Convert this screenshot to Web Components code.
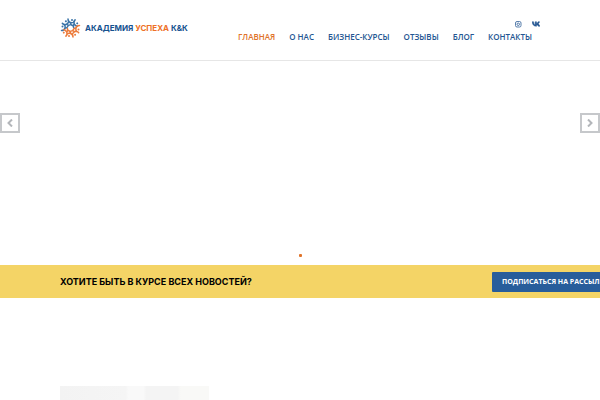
<!DOCTYPE html>
<html lang="ru">
<head>
<meta charset="utf-8">
<meta name="viewport" content="width=device-width, initial-scale=1">
<title>Академия Успеха К&amp;К</title>
<style>
  body {
    margin: 0;
    background: #fff;
    color: #000;
    font-family: "Open Sans", "Noto Sans", sans-serif;
    overflow-x: hidden;
    --blue: #245692;
    --orange: #e0732a;
    --yellow: #f4d466;
  }
</style>
</head>
<body>
<site-header>
  <brand-logo slot="logo"></brand-logo>
  <social-links slot="social"></social-links>
  <nav-link href="#main" active>ГЛАВНАЯ</nav-link>
  <nav-link href="#about">О НАС</nav-link>
  <nav-link href="#courses">БИЗНЕС-КУРСЫ</nav-link>
  <nav-link href="#reviews">ОТЗЫВЫ</nav-link>
  <nav-link href="#blog">БЛОГ</nav-link>
  <nav-link href="#contacts">КОНТАКТЫ</nav-link>
</site-header>
<main>
  <hero-slider></hero-slider>
  <subscribe-bar>
    <span>ХОТИТЕ БЫТЬ В КУРСЕ ВСЕХ НОВОСТЕЙ?</span>
    <span slot="action">ПОДПИСАТЬСЯ НА РАССЫЛКУ</span>
  </subscribe-bar>
  <preview-picture></preview-picture>
</main>

<script>
class BaseElement extends HTMLElement {
  constructor() {
    super();
    this.shadowDOM = this.attachShadow({ mode: "open" });
  }

  connectedCallback() {
    this.render();
  }
}

class SiteHeader extends BaseElement {
  render() {
    this.shadowDOM.innerHTML = `
    <style>
    :host {
      display: block;
      border-bottom: 1px solid #e6e6e6;
    }
    header {
      display: flex;
      justify-content: space-between;
      align-items: flex-start;
      padding: 18px 10% 17px;
    }
    .right {
      display: flex;
      flex-direction: column;
      align-items: flex-end;
      gap: 3px;
      padding-top: 2px;
    }
    nav {
      display: flex;
      gap: 14px;
      padding-right: 8px;
    }
    </style>

    <header>
      <slot name="logo"></slot>
      <div class="right">
        <slot name="social"></slot>
        <nav><slot></slot></nav>
      </div>
    </header>
    `;
  }
}

class BrandLogo extends BaseElement {
  render() {
    this.shadowDOM.innerHTML = `
    <style>
    :host {
      display: block;
    }
    a {
      display: flex;
      align-items: center;
      gap: 4px;
      color: #16528f;
      font: bold 8px/20px Inter, Arial, sans-serif;
      text-decoration: none;
      white-space: nowrap;
    }
    svg {
      display: block;
    }
    .accent {
      color: #ee7128;
    }
    </style>

    <a href="#main">
      <svg width="21" height="20" viewBox="-21 -20 42 40" aria-hidden="true">
        <defs>
          <g id="man">
            <circle cx="3" cy="-16" r="2" fill="currentColor"/>
            <path d="M-5-18q0 6 5 7q4 1 7-1M0-11q-1 4 4 6" fill="none" stroke="currentColor" stroke-width="3" stroke-linecap="round"/>
          </g>
        </defs>
        <g color="#3a74a8">
          <use href="#man" transform="rotate(-90)"/>
          <use href="#man" transform="rotate(-45)"/>
          <use href="#man"/>
          <use href="#man" transform="rotate(45)"/>
        </g>
        <g color="#ec7c3c">
          <use href="#man" transform="rotate(90)"/>
          <use href="#man" transform="rotate(135)"/>
          <use href="#man" transform="rotate(180)"/>
          <use href="#man" transform="rotate(225)"/>
        </g>
      </svg>
      <span>АКАДЕМИЯ <span class="accent">УСПЕХА</span> К&amp;К</span>
    </a>
    `;
  }
}

class SocialLinks extends BaseElement {
  render() {
    this.shadowDOM.innerHTML = `
    <style>
    :host {
      display: flex;
      gap: 10px;
    }
    a {
      display: block;
      color: var(--blue);
    }
    svg {
      display: block;
    }
    </style>

    <a href="#instagram" aria-label="Instagram">
      <svg width="8" height="8" viewBox="0 0 16 16" fill="none" stroke="currentColor" stroke-width="1.5">
        <rect x="3" y="3" width="11" height="11" rx="3"/>
        <circle cx="8.5" cy="8.5" r="2.5"/>
      </svg>
    </a>
    <a href="#vk" aria-label="VK">
      <svg width="8" height="8" viewBox="0 0 16 16" fill="currentColor" stroke="currentColor">
        <path d="M8.8 12.5C3.5 12.5.4 9 .2 3.5h2.9c.1 4 1.9 5.6 3.2 6V3.5h2.7v3.4C10.4 6.700 11.700 5.200 12.200 3.500h2.900c-.4 2-1.900 3.500-3 4.200 1.100.5 2.900 1.800 3.700 4.800h-3C12.200 10.800 10.900 9.500 9 9.300v3.200z"/>
      </svg>
    </a>
    `;
  }
}

class NavLink extends BaseElement {
  render() {
    this.shadowDOM.innerHTML = `
    <style>
    :host {
      display: block;
    }
    a {
      display: block;
      color: var(--blue);
      font: 600 8px/12px "Open Sans", "Noto Sans", sans-serif;
      text-decoration: none;
      white-space: nowrap;
    }
    :host([active]) a {
      color: var(--orange);
    }
    </style>

    <a href="${this.getAttribute("href")}"><slot></slot></a>
    `;
  }
}

class HeroSlider extends BaseElement {
  render() {
    this.shadowDOM.innerHTML = `
    <style>
    :host {
      display: block;
    }
    section {
      display: flex;
      flex-direction: column;
      padding: 52px 0 8px;
      gap: 121px;
    }
    .arrows {
      display: flex;
      justify-content: space-between;
    }
    button {
      display: grid;
      place-items: center;
      box-sizing: border-box;
      width: 20px;
      height: 20px;
      padding: 0;
      border: 2px solid #c6c8cb;
      background: #fff;
      color: #b3b6ba;
    }
    .dot {
      align-self: center;
      width: 3px;
      height: 3px;
      border: 0;
      border-radius: 1px;
      background: var(--orange);
    }
    </style>

    <section>
      <div class="arrows">
        <button type="button" aria-label="Назад">
          <svg width="8" height="8" viewBox="0 0 8 8" fill="none" stroke="currentColor" stroke-width="2"><path d="M6 .5L2.500 4 6 7.500"/></svg>
        </button>
        <button type="button" aria-label="Вперёд">
          <svg width="8" height="8" viewBox="0 0 8 8" fill="none" stroke="currentColor" stroke-width="2"><path d="M2 .5L5.500 4 2 7.500"/></svg>
        </button>
      </div>
      <button class="dot" type="button" aria-label="Слайд 1"></button>
    </section>
    `;
  }
}

class SubscribeBar extends BaseElement {
  render() {
    this.shadowDOM.innerHTML = `
    <style>
    :host {
      display: block;
      overflow: hidden;
      background: var(--yellow);
    }
    section {
      display: grid;
      grid-template-columns: 80% auto;
      align-items: center;
      padding: 7px 0 6px 10%;
    }
    h2 {
      margin: 0;
      font: bold 9px/20px Inter, "Open Sans", sans-serif;
      white-space: nowrap;
    }
    button {
      justify-self: start;
      padding: 0 10px;
      border: 0;
      border-radius: 1px;
      background: #285d9b;
      color: #fff;
      font: bold 7px/20px "Open Sans", "Noto Sans", sans-serif;
      white-space: nowrap;
    }
    </style>

    <section>
      <h2><slot></slot></h2>
      <button type="button"><slot name="action"></slot></button>
    </section>
    `;
  }
}

class PreviewPicture extends BaseElement {
  render() {
    this.shadowDOM.innerHTML = `
    <style>
    :host {
      display: block;
      padding: 88px 10% 0;
    }
    div {
      width: 31%;
      height: 100px;
      background: linear-gradient(90deg, #f3f3f3 0, #f5f5f5 44%, #f9f9f9 46% 56%, #f4f4f4 58% 79%, #f9f9f7 81%);
    }
    </style>

    <div></div>
    `;
  }
}

customElements.define("site-header", SiteHeader);
customElements.define("brand-logo", BrandLogo);
customElements.define("social-links", SocialLinks);
customElements.define("nav-link", NavLink);
customElements.define("hero-slider", HeroSlider);
customElements.define("subscribe-bar", SubscribeBar);
customElements.define("preview-picture", PreviewPicture);
</script>
</body>
</html>
